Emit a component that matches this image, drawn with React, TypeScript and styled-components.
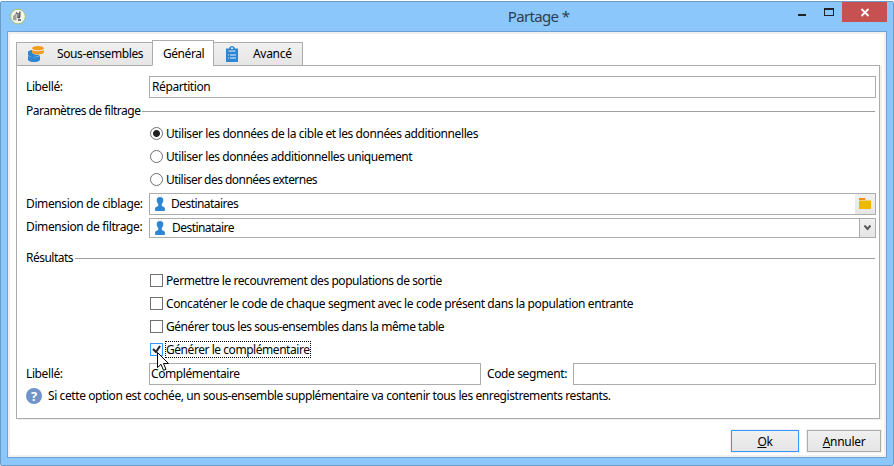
import React from 'react';
import styled, { createGlobalStyle } from 'styled-components';

const Global = createGlobalStyle`
  * { box-sizing: border-box; }
  body { margin: 0; background: #fff; font: 12px/16px "Noto Sans", "Open Sans", sans-serif; color: #000; overflow: hidden; }
`;

const Window = styled.div`
  width: 894px; height: 465px; margin-top: 1px; padding: 0 6px 7px 6px;
  background: #8cc7fb; border: 1px solid #6b9cc6; border-radius: 2px;
  display: flex; flex-direction: column;
`;
const TitleBar = styled.header`
  height: 29px; flex: none; display: flex; align-items: flex-start;
`;
const AppIcon = styled.svg`display: block; margin: 6px 0 0 3px; flex: none;`;
const Title = styled.h1`
  flex: 1; margin: 4px 0 0; padding-left: 263px; text-align: center; font-size: 15px; line-height: 20px; font-weight: 400;
  color: #2b3e4f; white-space: nowrap; letter-spacing: -0.65px;
`;
const Controls = styled.div`display: flex; flex: none;`;
const Control = styled.button<{ $w: number; $danger?: boolean }>`
  width: ${p => p.$w}px; height: 20px; padding: 0; border: 0; display: block;
  background: ${p => (p.$danger ? '#c75050' : 'transparent')};
  svg { display: block; }
`;
const Client = styled.main`
  flex: 1; min-height: 0; border: 1px solid #6ea2d4; background: #fff; box-shadow: inset 0 0 0 2px #f0f0f0;
  padding: 8px 5px 5px 8px; display: flex; flex-direction: column;
`;
const Tabs = styled.div`display: flex; align-items: flex-end; height: 26px; position: relative; margin-bottom: -1px;`;
const Tab = styled.div<{ $w: number; $active?: boolean; $pad?: number; $gap?: number }>`
  width: ${p => p.$w}px; height: ${p => (p.$active ? 26 : 24)}px;
  border: 1px solid #acacac; border-bottom-color: ${p => (p.$active ? '#fff' : '#acacac')};
  margin-right: -1px; display: flex; align-items: center; padding: ${p => (p.$active ? 2 : 0)}px 0 0 ${p => p.$pad ?? 10}px;
  gap: ${p => p.$gap ?? 12}px;
  background: ${p => (p.$active ? '#fff' : 'linear-gradient(#f0f0f0, #e5e5e5)')};
  svg { flex: none; }
`;
const Panel = styled.section`
  width: 864px; height: 355px; border: 1px solid #acacac; box-shadow: 2px 1px 0 #f0f0f0;
  padding: 10px 3px 0 9px; display: flex; flex-direction: column;
`;
const Text = styled.span<{ $ls?: number }>`
  white-space: nowrap; letter-spacing: ${p => p.$ls ?? -0.41}px;
`;
const FormRow = styled.div<{ $h?: number; $mt?: number }>`
  display: flex; height: ${p => p.$h ?? 22}px; margin-top: ${p => p.$mt ?? 0}px; flex: none;
`;
const Label = styled.label<{ $w: number; $lh?: number; $pad?: number }>`
  width: ${p => p.$w}px; padding-left: ${p => p.$pad ?? 0}px; flex: none; white-space: nowrap;
  line-height: ${p => p.$lh ?? 21}px; letter-spacing: -0.38px;
`;
const Field = styled.div<{ $w: number; $raised?: boolean; $pad?: number }>`
  width: ${p => p.$w}px; border: 1px solid #acacac; background: #fff; display: flex; align-items: center;
  padding-left: ${p => p.$pad ?? 2}px;
  & > span { margin-bottom: ${p => (p.$raised ? 1 : 0)}px; }
`;
const PersonSvg = styled.svg<{ $gap: number }>`flex: none; margin: 0 ${p => p.$gap}px 1px 3px;`;
const FieldButton = styled.button<{ $w: number; $line?: boolean }>`
  margin-left: auto; width: ${p => p.$w}px; height: 100%; padding: 0 0 1px; border: 0;
  border-left: ${p => (p.$line ? '1px solid #acacac' : '0')};
  background: linear-gradient(#f0f0f0, #e5e5e5); display: flex; align-items: center; justify-content: center;
`;
const Legend = styled.div<{ $mt: number }>`
  display: flex; align-items: center; height: 16px; margin: ${p => p.$mt}px 1px 0 0; flex: none; gap: 2px;
  &::after { content: ''; flex: 1; height: 1px; background: #a0a0a0; margin-top: 1px; }
`;
const Options = styled.div<{ $mt: number }>`
  margin: ${p => p.$mt}px 0 0 124px; display: flex; flex-direction: column; flex: none;
`;
const Option = styled.div`height: 23px; display: flex; align-items: center; gap: 2px;`;
const Radio = styled.span<{ $on?: boolean }>`
  width: 13px; height: 13px; border: 1px solid #707070; border-radius: 50%;
  background: ${p => (p.$on ? 'radial-gradient(circle, #212121 3px, #fff 3.9px)' : '#fff')};
`;
const Check = styled.span<{ $on?: boolean }>`
  width: 13px; height: 13px; border: 1px solid ${p => (p.$on ? '#3399ff' : '#707070')};
  background: ${p => (p.$on ? '#f3f9ff' : '#fff')};
  svg { display: block; }
`;
const OptionText = styled(Text)<{ $focus?: boolean }>`
  padding: 0 1px; height: 17px; line-height: 18px;
  outline: ${p => (p.$focus ? '1px dotted #000' : 'none')}; outline-offset: -1px;
`;
const Hint = styled.div`display: flex; align-items: center; height: 16px; margin-top: 3px; gap: 6px;`;
const HelpBadge = styled.span`
  width: 16px; height: 16px; border-radius: 50%; background: #7094c8; color: #fff; text-align: center;
  font: 700 13px/16px "Open Sans", "Noto Sans", sans-serif; flex: none;
`;
const Footer = styled.footer`display: flex; justify-content: flex-end; gap: 8px; margin-top: 11px;`;
const Button = styled.button<{ $w: number; $primary?: boolean }>`
  width: ${p => p.$w}px; height: 22px; padding: 1px 0 0; font: inherit; letter-spacing: -0.3px; color: #000;
  border: 1px solid ${p => (p.$primary ? '#3399ff' : '#acacac')}; box-shadow: 0 0 0 1px #f0f0f0;
  background: linear-gradient(#f0f0f0, #e5e5e5);
`;
const Pointer = styled.svg`position: absolute; left: 157px; top: 352px;`;

const Person = ({ gap }: { gap: number }) => (
  <PersonSvg $gap={gap} width="10" height="14" viewBox="0 0 10 14" fill="#2e86d3">
    <path d="M5 0C7.4 0 8.6 1.4 8.3 3.7C8.1 5.4 7.3 6.2 6.8 7V9L9 10C9.8 10.4 10 11.2 10 13Q10 14 9 14H1Q0 14 0 13C0 11.2 .2 10.4 1 10L3.2 9V7C2.7 6.2 1.9 5.4 1.7 3.7C1.4 1.4 2.6 0 5 0Z" />
  </PersonSvg>
);

const radios: [string, boolean, number][] = [
  ['Utiliser les données de la cible et les données additionnelles', true, -0.41],
  ['Utiliser les données additionnelles uniquement', false, -0.42],
  ['Utiliser des données externes', false, -0.54],
];
const checks: [string, boolean, number][] = [
  ['Permettre le recouvrement des populations de sortie', false, -0.44],
  ['Concaténer le code de chaque segment avec le code présent dans la population entrante', false, -0.39],
  ['Générer tous les sous-ensembles dans la même table', false, -0.45],
  ['Générer le complémentaire', true, -0.45],
];

export default function App() {
  return (
    <>
      <Global />
      <Window>
        <TitleBar>
          <AppIcon width="16" height="17" viewBox="0 0 16 17">
            <circle cx="8" cy="8.5" r="7.4" fill="#f4f4ee" stroke="#9abf62" />
            <path d="M3 8l3.5-3v7.5L3 12z" fill="#a0a09c" />
            <path d="M6 5.5l1-1M9.8 3.5V9M8 5v4.5h2M8 12h3" fill="none" stroke="#4c4c4c" strokeWidth="1.3" />
          </AppIcon>
          <Title>Partage *</Title>
          <Controls>
            <Control $w={27} aria-label="Réduire"><svg width="27" height="20"><path d="M10 12h8v2h-8z" fill="#222" /></svg></Control>
            <Control $w={27} aria-label="Agrandir"><svg width="27" height="20"><path d="M9 6h10v8H9zM10 8v5h8V8z" fill="#222" fillRule="evenodd" /></svg></Control>
            <Control $w={45} $danger aria-label="Fermer"><svg width="45" height="20"><path d="M19.5 7l7 7M26.5 7l-7 7" stroke="#fff" strokeWidth="1.8" /></svg></Control>
          </Controls>
        </TitleBar>
        <Client>
          <Tabs>
            <Tab $w={137} $pad={11} $gap={13}>
              <svg width="16" height="16" viewBox="0 0 16 16">
                <path d="M0 5.5Q1.5 4 4 4v2.5Q5 9 12 8.8V9Q10 11 6 11Q1 11 0 9z" fill="#2e86d3" />
                <path d="M0 10Q6 12.3 12 10V14Q10.5 16 6 16T0 14z" fill="#2e86d3" />
                <path d="M4 2.2Q5 0 10 0t6 2.2Q15 4.3 10 4.3T4 2.2zM4 4.2Q10 6.5 16 4.2V6.5Q14.5 8.4 10 8.4T4 6.5z" fill="#f29c1f" />
              </svg>
              <Text $ls={-0.4}>Sous-ensembles</Text>
            </Tab>
            <Tab $w={62} $active><Text $ls={-0.45}>Général</Text></Tab>
            <Tab $w={90} $pad={12} $gap={15}>
              <svg width="12" height="16" viewBox="0 0 12 16">
                <path d="M0 2.5h3.2V1.8Q4 0 6 0t2.8 1.8v.7H12V16H0z" fill="#2e86d3" />
                <path d="M5 1.5h2v1.5H5zM2.5 4.5h7v1h-7zM2 8.5h1v1H2zM4 8.5h6v1H4zM2 11.5h1v1H2zM4 11.5h6v1H4z" fill="#e4effa" />
              </svg>
              <Text $ls={-0.3}>Avancé</Text>
            </Tab>
          </Tabs>
          <Panel>
            <FormRow><Label $w={123}>Libellé:</Label><Field $w={727}><Text>Répartition</Text></Field></FormRow>
            <Legend $mt={5}><Text $ls={-0.51}>Paramètres de filtrage</Text></Legend>
            <Options $mt={3}>
              {radios.map(([t, on, ls]) => <Option key={t}><Radio $on={on} /><OptionText $ls={ls}>{t}</OptionText></Option>)}
            </Options>
            <FormRow $mt={2}>
              <Label $w={123}>Dimension de ciblage:</Label>
              <Field $w={727} $raised><Person gap={6} /><Text $ls={-0.55}>Destinataires</Text>
                <FieldButton $w={20} aria-label="Ouvrir">
                  <svg width="12" height="11"><path d="M0 0h6v2H0z" fill="#f28a1c" /><path d="M6 0h1v2H6zM0 2h12v1H0z" fill="#f3cf86" /><path d="M0 3h12v8H0z" fill="#efb700" /></svg>
                </FieldButton>
              </Field>
            </FormRow>
            <FormRow $h={20} $mt={3}>
              <Label $w={123} $lh={18}>Dimension de filtrage:</Label>
              <Field $w={727}><Person gap={7} /><Text $ls={-0.55}>Destinataire</Text>
                <FieldButton $w={16} $line aria-label="Dérouler"><svg width="7" height="6"><path d="M.5 .5L3.5 4L6.5 .5" fill="none" stroke="#555" strokeWidth="2" /></svg></FieldButton>
              </Field>
            </FormRow>
            <Legend $mt={12}><Text $ls={-0.51}>Résultats</Text></Legend>
            <Options $mt={3}>
              {checks.map(([t, on, ls]) => (
                <Option key={t}><Check $on={on}>{on && <svg width="11" height="11"><path d="M2 5l3 3 4-6" fill="none" stroke="#212121" strokeWidth="2" /></svg>}</Check><OptionText $ls={ls} $focus={on}>{t}</OptionText></Option>
              ))}
            </Options>
            <FormRow $mt={2}>
              <Label $w={123}>Libellé:</Label><Field $w={332} $raised $pad={1}><Text>Complémentaire</Text></Field>
              <Label $w={92} $pad={6}>Code segment:</Label><Field $w={303} />
            </FormRow>
            <Hint>
              <HelpBadge>?</HelpBadge>
              <Text>Si cette option est cochée, un sous-ensemble supplémentaire va contenir tous les enregistrements restants.</Text>
            </Hint>
          </Panel>
          <Footer>
            <Button $w={68} $primary><u>O</u>k</Button>
            <Button $w={74}><u>A</u>nnuler</Button>
          </Footer>
        </Client>
      </Window>
      <Pointer width="13" height="20" viewBox="0 0 13 20"><path d="M.5 .5v15l3.5-3.2 2.5 6 2.5-1-2.5-5.8h5z" fill="#fff" stroke="#000" /></Pointer>
    </>
  );
}
